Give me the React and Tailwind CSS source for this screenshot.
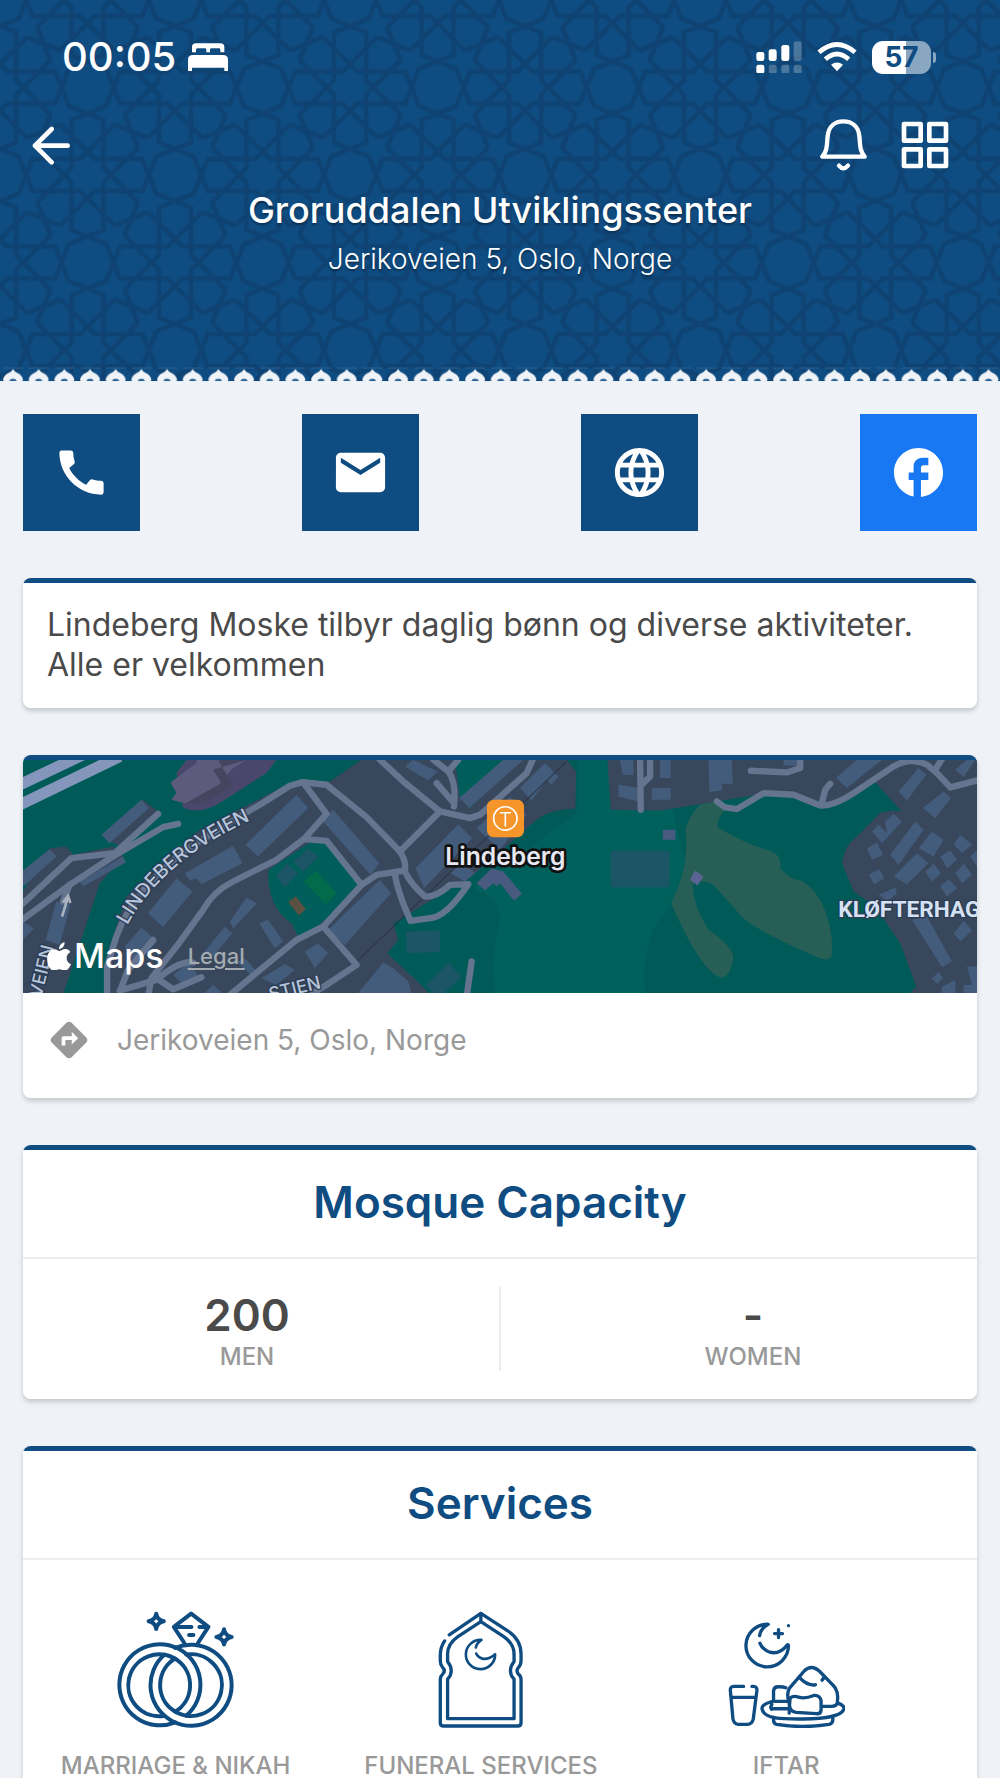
import { MdCall, MdDirections, MdEmail, MdFacebook, MdLanguage } from 'react-icons/md';

const contacts = [
	{ label: 'Call', href: 'tel:', icon: MdCall, color: 'bg-[#0f4c81]' },
	{ label: 'Email', href: 'mailto:', icon: MdEmail, color: 'bg-[#0f4c81]' },
	{ label: 'Website', href: '#website', icon: MdLanguage, color: 'bg-[#0f4c81]' },
	{ label: 'Facebook', href: '#facebook', icon: MdFacebook, color: 'bg-[#1877f2]' }
];

// one arm of the eight-fold star, repeated by the transforms below
const starArm = 'M-82 -152 L22 -48 H165 L184 0 M-82 -152 L-131 -131 L-152 -82';
const turns = [0, 90, 180, 270];
const octagon = 'M0 -78 L56 -56 L78 0 L56 56 L0 78 L-56 56 L-78 0 L-56 -56 Z';

const Star = ({ x, y }) => (
	<g transform={`translate(${x} ${y})`}>
		{turns.map((turn) => (
			<g key={turn} transform={`rotate(${turn})`}>
				<path d={starArm} />
				<path d={starArm} transform="scale(-1 1)" />
			</g>
		))}
	</g>
);

const HeaderPattern = () => (
	<svg className="absolute inset-0 h-full w-full" aria-hidden="true">
		<defs>
			<pattern
				id="girih"
				width="525"
				height="525"
				patternUnits="userSpaceOnUse"
				patternTransform="scale(0.3334)"
			>
				<g fill="none" stroke="#0e4373" strokeWidth="14">
					<Star x={262.5} y={0} />
					<Star x={262.5} y={525} />
					<Star x={0} y={262.5} />
					<Star x={525} y={262.5} />
					<path d={octagon} transform="translate(262.5 262.5)" />
					<path d={octagon} />
					<path d={octagon} transform="translate(525 0)" />
					<path d={octagon} transform="translate(0 525)" />
					<path d={octagon} transform="translate(525 525)" />
				</g>
			</pattern>
		</defs>
		<rect width="100%" height="100%" fill="url(#girih)" />
	</svg>
);

const HeaderEdge = () => (
	<svg className="relative block h-4 w-full" aria-hidden="true">
		<defs>
			<pattern
				id="edge"
				width="77"
				height="48"
				patternUnits="userSpaceOnUse"
				patternTransform="scale(0.3334)"
			>
				<path d="M10 6 H70" stroke="#2a6293" strokeWidth="3" />
				<path
					d="M39 9 Q43 17 54 22 Q67 29 69 41 L67 45 H77 V48 H0 V45 H11 L9 41 Q11 29 24 22 Q35 17 39 9 Z"
					fill="#eff3f8"
				/>
				<path d="M28 45 Q30 38 39 38 Q48 38 50 45 Z" fill="#2a6293" />
			</pattern>
		</defs>
		<rect width="100%" height="16" fill="url(#edge)" />
	</svg>
);

const StatusBar = () => (
	<div className="flex h-[114px] items-center justify-between pr-[64px] pl-[62px]">
		<div className="flex items-center gap-3">
			<span className="text-[40px] leading-none font-medium">00:05</span>
			<svg className="w-10" viewBox="0 0 120 84" fill="#fff" aria-label="Sleep focus" role="img">
				<path d="M12 28 V12 Q12 1 24 1 H97 Q109 1 109 12 V28 H97 V20 Q97 16 92 16 H70 Q66 16 66 20 V28 H55 V20 Q55 16 51 16 H29 Q24 16 24 20 V28 Z" />
				<path d="M0 84 V50 Q0 36 15 36 H105 Q120 36 120 50 V84 H109 V74 H12 V84 Z" />
			</svg>
		</div>
		<div className="flex items-center gap-[15px]">
			<svg className="w-[46px]" viewBox="0 0 138 98" fill="#fff" aria-label="Signal" role="img">
				<rect x="1" y="33" width="24" height="27" rx="7" />
				<rect x="38" y="25" width="24" height="35" rx="7" />
				<rect x="76" y="12" width="24" height="48" rx="7" />
				<rect x="113" y="1" width="24" height="59" rx="7" opacity=".24" />
				<rect x="1" y="71" width="24" height="27" rx="7" />
				<g opacity=".24">
					<rect x="38" y="71" width="24" height="27" rx="7" />
					<rect x="76" y="71" width="24" height="27" rx="7" />
					<rect x="113" y="71" width="24" height="27" rx="7" />
				</g>
			</svg>
			<svg className="w-10" viewBox="0 0 120 90" aria-label="Wi-Fi" role="img">
				<g fill="none" stroke="#fff" strokeWidth="14">
					<path d="M6 31 Q60 -16 114 31" />
					<path d="M25 52 Q60 20 95 52" />
				</g>
				<path d="M42 68 Q60 55 78 68 L60 88 Z" fill="#fff" />
			</svg>
			<div className="flex items-center gap-[2px]">
				<span className="flex h-[33px] w-[59px] items-center justify-center rounded-[11px] bg-linear-to-r from-white from-58% to-[#8aa7c2] to-58% text-[28px] leading-none font-bold text-[#0f4c81]">
					57
				</span>
				<span className="h-[11px] w-[3px] rounded-r-full bg-[#8aa7c2]" />
			</div>
		</div>
	</div>
);

const Header = () => (
	<header className="relative bg-[#0f4c81] text-white">
		<HeaderPattern />
		<div className="relative">
			<StatusBar />
			<nav className="flex h-[62px] items-center justify-between pr-[51px] pl-8">
				<button type="button" aria-label="Back">
					<svg className="w-[39px]" viewBox="0 0 117 117" fill="none" stroke="#fff" strokeWidth="14" strokeLinecap="round" strokeLinejoin="round">
						<path d="M59 9 L9 59 L59 109 M9 59 H107" />
					</svg>
				</button>
				<div className="flex items-center gap-[34px]">
					<button type="button" aria-label="Notifications">
						<svg className="w-[47px]" viewBox="0 0 141 156" fill="none" stroke="#fff" strokeWidth="13" strokeLinecap="round" strokeLinejoin="round">
							<path d="M7 113 H134 C118 94 121 78 118 51 C115 22 96 7 70 7 C45 7 26 22 23 51 C20 78 23 94 7 113 Z" />
							<path d="M57 140 Q70 156 84 140" />
						</svg>
					</button>
					<button type="button" aria-label="Menu">
						<svg className="w-12" viewBox="0 0 144 144" fill="none" stroke="#fff" strokeWidth="14" strokeLinejoin="round">
							<rect x="9" y="9" width="50" height="50" />
							<rect x="85" y="9" width="50" height="50" />
							<rect x="9" y="85" width="50" height="50" />
							<rect x="85" y="85" width="50" height="50" />
						</svg>
					</button>
				</div>
			</nav>
			<div className="mt-3 mb-[89px] text-center [text-shadow:0_2px_2px_rgba(0,0,0,0.35)]">
				<h1 className="text-[36px] leading-[44px] font-medium">Groruddalen Utviklingssenter</h1>
				<p className="mt-[9px] text-[28px] leading-9 font-light">Jerikoveien 5, Oslo, Norge</p>
			</div>
		</div>
		<HeaderEdge />
	</header>
);

const Card = ({ title, children }) => (
	<section className="overflow-hidden rounded-lg bg-[linear-gradient(#0f4c81_5px,#fff_5px)] pt-[5px] shadow-[0_3px_5px_rgba(0,0,0,0.18)]">
		{title && (
			<h2 className="border-b-2 border-[#ededed] pt-6 pb-[27px] text-center text-[44px] leading-[56px] font-semibold text-[#0f4c81]">
				{title}
			</h2>
		)}
		{children}
	</section>
);

const Map = () => (
	<div className="relative">
		<svg
			className="block h-[233px] w-full"
			viewBox="70 60 2860 700"
			preserveAspectRatio="xMidYMid slice"
			role="img"
			aria-label="Map of Lindeberg"
		>
			<rect x="0" y="0" width="3000" height="800" fill="#005b58" />
			<path d="M1420 448 Q1500 470 1500 540 Q1470 640 1485 770 H1938 Q1915 600 2010 500 L2060 380 L1980 60 H1730 V220 Z" fill="#00605c" />

			{/* built-up areas */}
			<g fill="#38475c">
				<path d="M60 470 L150 325 L200 320 L220 345 L340 320 L370 350 L300 430 L190 765 H60 Z" />
				<path d="M330 765 V620 L380 470 L600 270 L870 130 L990 125 L1085 60 H1700 L1728 95 L1726 207 Q1650 208 1610 240 L1420 405 L1180 550 L1195 600 L1162 640 L1300 770 Z" />
				<path d="M1822 60 H2930 V765 H2725 L2748 740 L2700 610 L2625 500 L2560 455 L2526 370 Q2530 320 2570 290 L2640 220 Q2680 208 2705 216 L2620 122 L2500 190 L2300 160 L2150 185 L1980 212 L1832 210 Z" />
				<path d="M310 290 L430 180 L475 215 L360 320 Z" />
			</g>
			<path d="M806 390 L935 305 L985 310 L1085 435 L1000 520 L900 600 L875 550 Q800 500 806 390 Z" fill="#005e5a" />
			<path d="M1365 60 H1560 L1410 205 L1380 175 Z" fill="#005e5a" />

			{/* golf course */}
			<g fill="#275f57">
				<path d="M2100 195 L2145 185 L2175 210 Q2150 235 2152 262 Q2230 310 2310 333 Q2345 345 2340 385 Q2370 420 2405 423 Q2480 470 2495 600 V640 Q2495 665 2460 655 Q2300 590 2230 535 Q2170 470 2140 435 Q2110 415 2077 435 Q2080 500 2125 570 Q2200 620 2199 655 Q2190 715 2160 713 Q2100 690 2013 490 Q2070 380 2056 270 Q2070 220 2100 195 Z" />
			</g>

			{/* school */}
			<path d="M560 60 H830 L800 100 L660 190 Q600 225 550 205 L530 100 Z" fill="#4a476d" />
			<path d="M590 60 H740 L700 85 L660 130 L700 140 L570 195 L515 180 L530 160 L512 128 L590 70 Z" fill="#5c5b7d" />
			<path d="M655 60 H740 L640 90 L665 130 L550 195 L610 190 L700 140 Z" fill="#454560" />

			<g fill="none" stroke="#8496bb" strokeWidth="34">
				<path d="M50 140 L260 40" />
				<path d="M50 200 L360 50" />
			</g>

			<g fill="#445c7b">
				<path d="M305 285 L425 180 L447 205 L330 310 Z" />
				<path d="M60 400 L150 328 L170 350 L60 450 Z" />
				<path d="M240 425 L370 350 L378 368 L250 440 Z" />
				<path d="M170 485 L212 495 L180 615 L138 600 Z" />
				<path d="M60 540 L103 565 L70 600 Z" />
				<path d="M737 315 L890 165 L925 205 L775 350 Z" />
				<path d="M555 400 L700 318 L728 370 L605 433 L590 415 L570 422 Z" />
				<path d="M530 415 L578 455 L490 562 L445 520 Z" />
				<path d="M425 563 L472 605 L400 680 L375 620 Z" />
				<path d="M965 240 L1000 210 L1138 370 L1112 405 Z" />
				<path d="M740 473 L772 490 L700 565 L690 545 Z" />
				<path d="M675 560 L698 580 L640 650 L615 635 Z" />
				<path d="M778 550 L805 540 L850 605 L825 625 Z" />
				<path d="M915 635 L955 610 L985 640 L945 685 Z" />
				<path d="M710 665 L735 655 L775 700 L760 712 Z" />
				<path d="M785 715 L855 672 L885 690 L830 735 Z" />
				<path d="M520 705 L565 668 L605 720 L555 740 Z" />
				<path d="M610 762 L640 735 L670 762 Z" />
				<path d="M985 570 L1140 420 L1173 460 L1035 615 Z" />
				<path d="M1070 765 L1150 668 L1180 685 L1225 725 L1235 765 Z" />
				<path d="M1215 80 L1240 60 L1313 95 L1285 122 Z" />
				<path d="M1378 175 L1510 60 H1570 L1408 205 Z" />
				<path d="M1560 145 L1635 70 L1675 110 L1655 135 L1640 120 L1595 182 Z" />
				<path d="M1247 385 L1375 253 L1416 295 L1272 445 Z" />
				<path d="M1430 265 L1530 170 L1580 225 L1500 330 Z" />
				<path d="M1352 400 L1385 365 L1425 400 L1395 425 Z" />
				<path d="M1430 430 L1475 385 L1510 395 L1566 462 L1542 483 L1500 430 L1490 440 L1480 430 L1455 452 Z" fill="#485a80" />
				<path d="M1860 60 H1900 V105 H1868 Z" />
				<path d="M1855 135 L1915 145 V185 L1855 170 Z" />
				<path d="M1955 145 H2012 V180 H1955 Z" />
				<path d="M1980 60 H2012 V115 H1980 Z" />
				<path d="M2125 60 H2195 L2198 132 H2165 V152 L2128 157 Z" />
				<path d="M2350 60 H2392 V77 H2350 Z" />
				<path d="M2507 115 L2570 60 H2645 L2540 145 Z" />
				<path d="M2695 155 L2755 85 L2778 105 L2720 182 Z" />
				<path d="M2768 205 L2830 155 L2852 175 L2805 235 Z" />
				<path d="M2865 90 L2900 60 H2925 L2890 112 Z" />
				<path d="M2655 245 L2680 222 L2705 245 L2645 310 L2615 275 L2635 255 L2660 280 Z" />
				<path d="M2670 345 L2745 245 L2770 270 L2695 375 Z" />
				<path d="M2755 325 L2795 275 L2830 300 L2800 350 Z" />
				<path d="M2600 325 L2630 308 L2648 345 L2615 360 Z" />
				<path d="M2605 405 L2638 388 L2652 415 L2622 433 Z" />
				<path d="M2680 410 L2750 340 L2785 370 L2720 433 Z" />
				<path d="M2860 315 L2880 285 L2915 315 L2885 340 Z" />
				<path d="M2820 350 L2850 332 L2870 360 L2840 385 Z" />
				<path d="M2865 400 L2890 372 L2915 405 L2885 430 Z" />
				<path d="M2775 395 L2800 372 L2822 400 L2795 425 Z" />
				<path d="M2820 440 L2845 418 L2870 445 L2840 470 Z" />
				<path d="M2635 465 L2685 443 L2690 462 L2660 485 Z" />
				<path d="M2735 540 L2780 530 L2855 665 L2825 682 Z" />
				<path d="M2860 580 L2890 543 L2915 572 L2880 605 Z" />
				<path d="M2795 715 L2815 697 L2828 715 L2810 732 Z" />
				<path d="M2825 740 L2865 720 V762 H2822 Z" />
				<path d="M2900 680 H2930 V762 H2890 V735 H2915 Z" />
				<path d="M2910 350 L2930 330 V380 Z" />
				<path d="M1988 270 H2026 V300 H1988 Z" fill="#485a80" />
				<path d="M2085 392 L2110 410 L2092 437 L2070 420 Z" fill="#5a6493" />
			</g>
			<g fill="#1b5566">
				<path d="M828 410 L860 370 L895 400 L855 443 Z" />
				<path d="M880 365 L925 325 L955 350 L910 395 Z" />
				<path d="M1832 333 H2008 V442 H1832 Z" />
				<path d="M1218 575 L1320 572 V636 L1220 640 Z" />
				<path d="M1278 735 L1345 668 L1385 710 L1330 762 H1300 Z" />
			</g>
			<path d="M912 425 L947 392 L1010 460 L978 493 Z" fill="#016b4a" />
			<path d="M865 487 L888 469 L918 508 L897 527 Z" fill="#5a5140" />

			<path d="M1070 665 L1700 65" fill="none" stroke="#2b3444" strokeWidth="3" />

			{/* roads */}
			<g fill="none" stroke="#65758f" strokeWidth="19" strokeLinejoin="round" strokeLinecap="round">
				<path d="M60 500 L215 355 L345 340 L475 222" />
				<path d="M60 545 L210 435 L340 350 L490 262 L535 252" />
				<path d="M210 435 L190 485" />
				<path d="M322 770 V680 L350 590 Q400 450 560 330 Q700 240 780 195 L870 138 L908 127 L980 135 L1100 232 L1200 335 Q1220 365 1215 395 Q1230 430 1275 470 Q1310 472 1350 435 L1405 433 Q1340 530 1290 535 L1232 543 Q1190 450 1185 400" />
				<path d="M915 135 L980 222 L912 298 L830 360 L700 425 Q640 455 610 510 L530 620 L455 715 L445 770" />
				<path d="M915 298 L980 303 L1085 435 L970 560 L890 600 L690 765" />
				<path d="M970 560 L1070 675 L980 735 L930 765" />
				<path d="M1085 435 L1130 405 L1215 392" />
				<path d="M1140 60 L1210 125 L1320 215 L1200 335" />
				<path d="M1320 215 L1410 235 L1440 225 L1580 100 L1598 60" />
				<path d="M1300 60 L1345 95 Q1370 130 1362 200 M1375 60 L1345 95 M1310 130 L1362 190" />
				<path d="M360 752 L470 720 Q540 660 580 668 M362 750 L385 690 L460 600 M470 715 L520 748 L605 712" />
				<path d="M1415 665 L1400 770" />
				<path d="M1920 60 L1922 210 M1950 60 V110 L1925 135" />
				<path d="M2150 185 L2175 203 L2210 208 L2290 160 L2380 165 L2460 197 Q2500 200 2560 160 L2680 80 Q2730 50 2780 75 L2810 100 L2850 143 L2930 122" />
				<path d="M2252 93 L2360 98 L2400 85 V60 M2465 190 L2475 150 L2490 132 M2805 90 L2830 50" />
			</g>
			<path d="M187 530 L205 472 M190 488 L205 468 L212 490" fill="none" stroke="#a9b3bf" strokeWidth="8" />

			{/* street names */}
			<defs>
				<path id="veien" d="M383 556 Q500 340 820 212" />
				<path id="stien" d="M812 782 L1030 728" />
				<path id="side" d="M125 775 L170 590" />
			</defs>
			<g fill="#b6c5da" stroke="#2c3c54" strokeWidth="8" paintOrder="stroke" className="font-[Inter,sans-serif] font-medium">
				<text fontSize="58">
					<textPath href="#veien">LINDEBERGVEIEN</textPath>
				</text>
				<text fontSize="54">
					<textPath href="#stien">STIEN</textPath>
				</text>
				<text fontSize="54">
					<textPath href="#side">VEIEN</textPath>
				</text>
			</g>
			<text x="2514" y="531" fontSize="68" fill="#d5e2f3" stroke="#2c3c54" strokeWidth="8" paintOrder="stroke" className="font-[Roboto,sans-serif] font-bold">
				KLØFTERHAGEN
			</text>

			{/* station marker */}
			<rect x="1461" y="180" width="111" height="112" rx="20" fill="#f6962a" />
			<circle cx="1516" cy="236" r="35" fill="none" stroke="#fff" strokeWidth="5" />
			<path d="M1500 219 H1533 M1516 219 V260" stroke="#fff" strokeWidth="5" />
			<text x="1516" y="376" fontSize="74" textAnchor="middle" fill="#e8e8f2" stroke="#111" strokeWidth="16" strokeLinejoin="round" paintOrder="stroke" className="font-[Inter,sans-serif] font-semibold">
				Lindeberg
			</text>
		</svg>
		<div className="absolute bottom-4 left-6 flex items-center gap-6">
			<span className="flex items-center gap-[3px] text-[34px] leading-[42px] font-medium text-white">
				<svg className="w-6" viewBox="0 0 72 86" fill="#fff" aria-hidden="true">
					<path d="M36 22 Q37 4 53 0 Q53 18 36 22 Z" />
					<path d="M36 27 C43 27 46 21 55 21 C62 21 67 25 70 30 C54 39 56 61 72 67 C68 77 61 86 53 86 C47 86 44 82 37 82 C30 82 27 86 21 86 C8 86 -2 63 1 45 C3 31 12 22 23 22 C29 22 33 27 36 27 Z" />
				</svg>
				Maps
			</span>
			<a href="#legal" className="text-[22px] leading-7 font-medium text-[#a3abb0] underline underline-offset-4">
				Legal
			</a>
		</div>
	</div>
);

const RingsIcon = () => (
	<svg className="w-[117px]" viewBox="0 0 352 352" fill="none" stroke="#0f4c81" strokeWidth="12" strokeLinecap="round" strokeLinejoin="round" aria-hidden="true">
		<path d="M118 8 Q121 28 141 31 Q121 34 118 54 Q115 34 95 31 Q115 28 118 8 Z" />
		<path d="M322 55 Q325 75 345 78 Q325 81 322 101 Q319 81 299 78 Q319 75 322 55 Z" />
		<path d="M203 97 L171 48 L223 8 L275 48 L243 97 M171 48 H224 M248 48 H275 M217 72 H230" />
		<path d="M175 335 A122 122 0 1 1 208 315" />
		<path d="M143 315 A93 93 0 1 1 175 303" />
		<path d="M175 111 A122 122 0 1 1 143 131" />
		<path d="M208 131 A93 93 0 1 1 175 143" />
	</svg>
);

const ArchIcon = () => (
	<svg className="w-[117px]" viewBox="0 0 352 352" fill="none" stroke="#0f4c81" strokeWidth="10" strokeLinecap="round" strokeLinejoin="round" aria-hidden="true">
		<path d="M82 72 L177 7 L258 60 Q298 86 298 130 V150 Q298 162 290 170 Q282 180 290 190 Q298 196 298 206 V336 Q298 346 288 346 H65 Q55 346 55 336 V206 Q55 196 62 190 Q72 180 62 170 Q55 162 55 150 V130 Q56 108 68 90" />
		<path d="M177 7 V32 L108 77 Q77 98 77 130 V152 Q88 166 88 180 Q88 194 77 205 V324 H277 V205 Q266 194 266 180 Q266 166 277 152 V130 Q277 98 246 77 L177 32" />
		<path strokeWidth="8" d="M162 110 Q165 96 179 87 A44 44 0 1 0 220 130 Q202 146 184 144 Q168 140 163 128" />
	</svg>
);

const IftarIcon = () => (
	<svg className="w-[117px]" viewBox="0 0 352 352" fill="none" stroke="#0f4c81" strokeWidth="10" strokeLinecap="round" strokeLinejoin="round" aria-hidden="true">
		<path d="M95 74 Q99 52 121 40 A64 64 0 1 0 182 104 Q181 100 178 102 Q155 132 126 124 Q104 116 96 97" />
		<path d="M152 56 V80 M140 68 H164" />
		<circle cx="182" cy="44" r="2" fill="#0f4c81" strokeWidth="6" />
		<path d="M47 227 H17 Q6 227 7 239 L15 325 Q18 341 32 341 H58 Q73 341 76 325 L87 239 Q88 227 77 227 H72 M10 260 H84" />
		<path d="M184 307 Q186 285 184 277 Q175 250 185 232 L228 182 Q250 158 276 182 L315 222 Q334 240 329 275 Q328 287 310 287 H284" />
		<path d="M214 199 Q238 226 263 222 M290 199 L283 208" />
		<path d="M187 262 Q196 254 212 259 Q232 265 258 254 Q276 252 280 270 V298 Q279 310 266 309 L205 305 Q184 302 185 282 Z" />
		<path d="M137 270 V240 Q139 228 150 228 Q164 227 174 231 M140 272 H184 M131 294 H182 M137 271 Q128 270 132 281 Q126 289 131 296" />
		<path d="M130 273 Q98 282 103 297 C112 327 170 325 226 325 C290 325 340 316 348 297 Q353 285 331 277" />
		<path d="M138 320 Q134 338 146 341 Q225 354 304 341 Q318 338 315 320" />
	</svg>
);

const services = [
	{ name: 'MARRIAGE & NIKAH', icon: RingsIcon },
	{ name: 'FUNERAL SERVICES', icon: ArchIcon },
	{ name: 'IFTAR', icon: IftarIcon }
];

const Capacity = ({ value, label }) => (
	<div className="flex flex-1 flex-col items-center text-[#4a4a4a]">
		<span className="text-[44px] leading-[56px] font-semibold">{value}</span>
		<span className="text-[24px] leading-7 font-medium text-[#999]">{label}</span>
	</div>
);

const App = () => (
	<div className="h-screen overflow-y-auto bg-[#eff3f8] font-[Inter,'Liberation_Sans',sans-serif] [scrollbar-width:none]">
		<Header />
		<main className="flex flex-col gap-[47px] px-[23px] pt-8 pb-12">
			<div className="flex justify-between">
				{contacts.map(({ label, href, icon: Icon, color }) => (
					<a
						key={label}
						href={href}
						aria-label={label}
						className={`flex size-[117px] items-center justify-center text-white ${color}`}
					>
						<Icon className="size-[59px]" />
					</a>
				))}
			</div>

			<Card>
				<p className="px-6 pt-[22px] pb-[23px] text-[32px] leading-10 text-[#4a4a4a]">
					Lindeberg Moske tilbyr daglig bønn og diverse aktiviteter. Alle er velkommen
				</p>
			</Card>

			<Card>
				<Map />
				<a href="#directions" className="flex items-center gap-[26px] px-6 pt-[25px] pb-9 text-[28px] leading-[44px] text-[#999]">
					<MdDirections className="size-[44px]" />
					Jerikoveien 5, Oslo, Norge
				</a>
			</Card>

			<Card title="Mosque Capacity">
				<div className="flex gap-7 py-7">
					<Capacity value="200" label="MEN" />
					<div className="w-[2px] bg-[#ededed]" />
					<Capacity value="-" label="WOMEN" />
				</div>
			</Card>

			<Card title="Services">
				<ul className="flex flex-wrap pt-[51px] pb-8">
					{services.map(({ name, icon: Icon }) => (
						<li key={name} className="flex w-[32%] flex-col items-center">
							<Icon />
							<span className="mt-6 text-[24px] leading-7 font-medium whitespace-nowrap text-[#999]">{name}</span>
						</li>
					))}
				</ul>
			</Card>
		</main>
	</div>
);

export default App;
